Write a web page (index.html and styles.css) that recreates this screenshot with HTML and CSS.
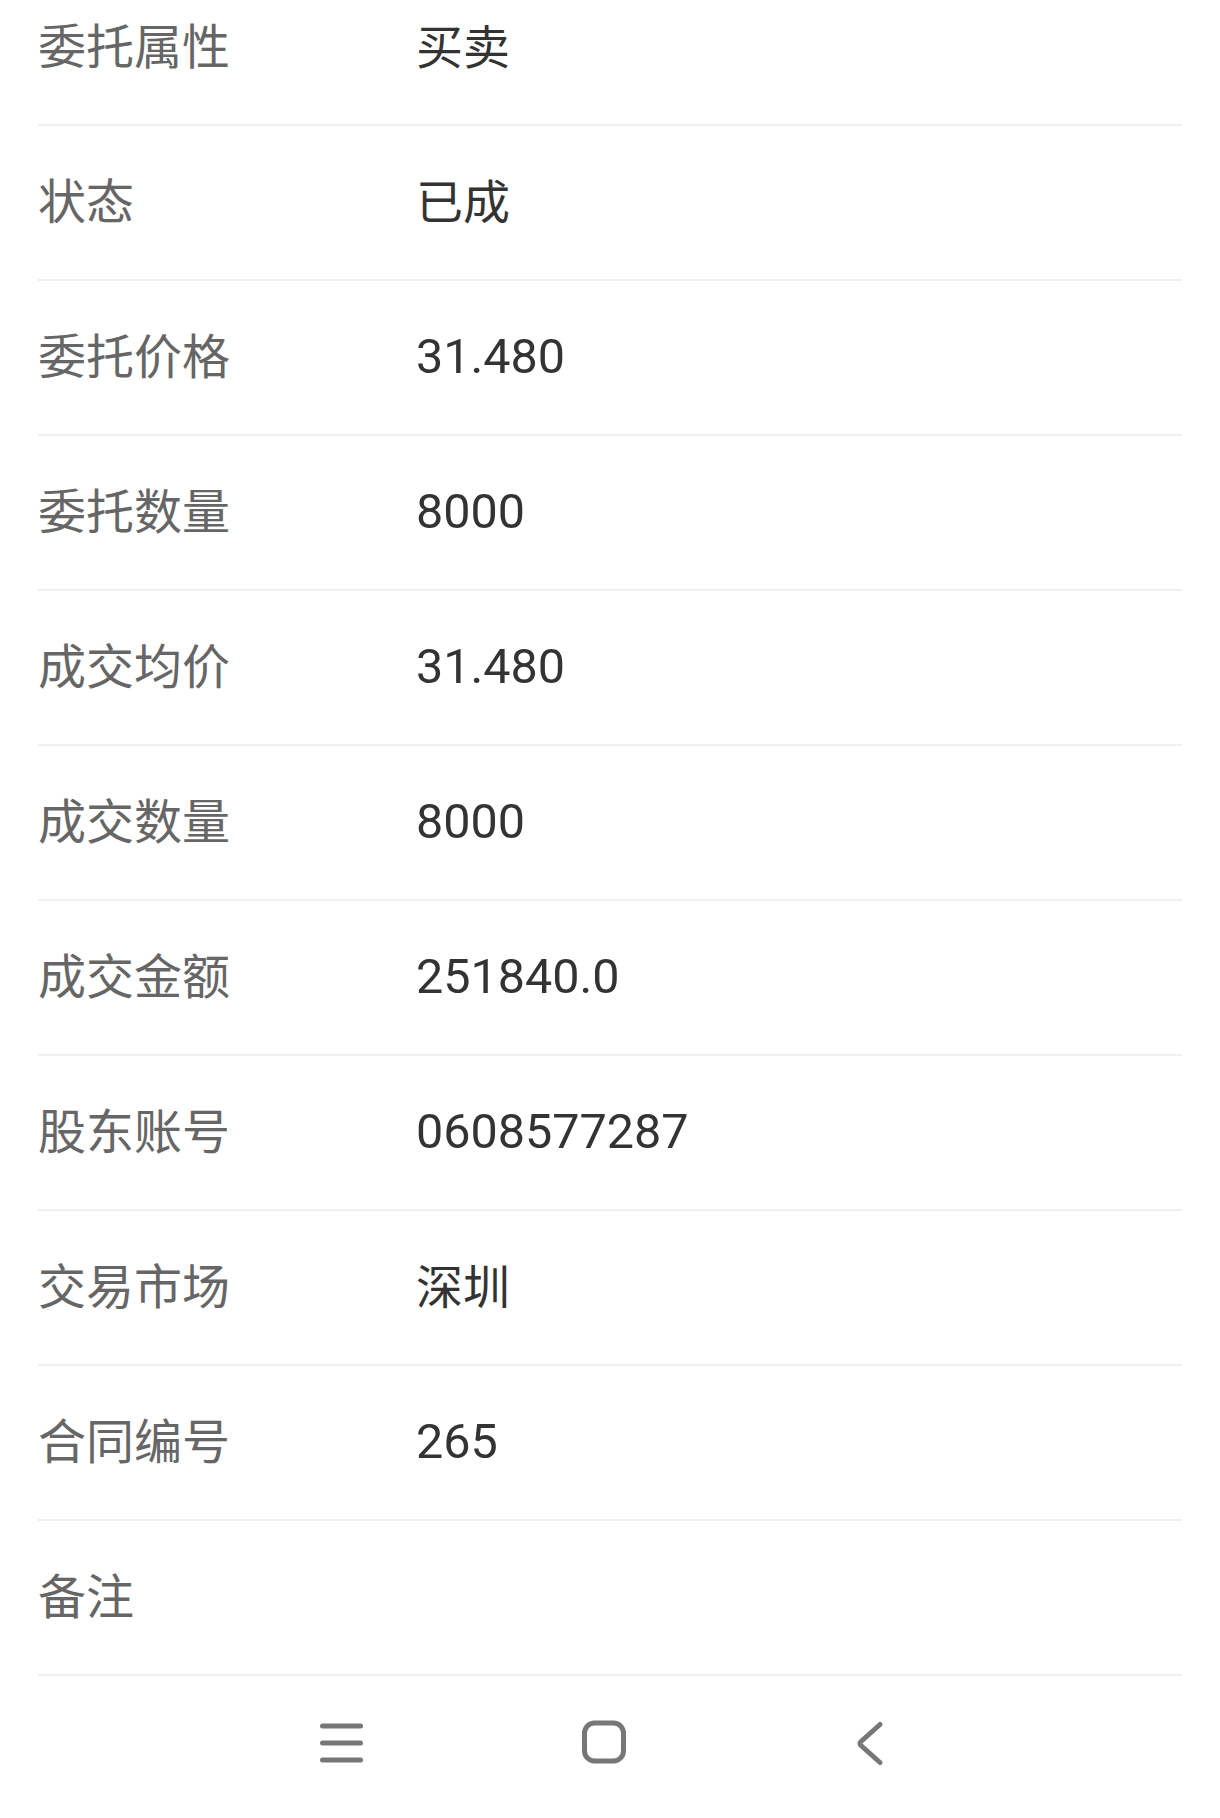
FILE: index.html
```html
<!DOCTYPE html>
<html lang="zh">
<head>
<meta charset="utf-8">
<link rel="stylesheet" href="styles.css">
</head>
<body>
<div class="screen">
  <div class="list">
    <div class="row"><span class="label">委托属性</span><span class="value cjk">买卖</span></div>
    <div class="row"><span class="label">状态</span><span class="value cjk">已成</span></div>
    <div class="row"><span class="label">委托价格</span><span class="value">31.480</span></div>
    <div class="row"><span class="label">委托数量</span><span class="value">8000</span></div>
    <div class="row"><span class="label">成交均价</span><span class="value">31.480</span></div>
    <div class="row"><span class="label">成交数量</span><span class="value">8000</span></div>
    <div class="row"><span class="label">成交金额</span><span class="value">251840.0</span></div>
    <div class="row"><span class="label">股东账号</span><span class="value">0608577287</span></div>
    <div class="row"><span class="label">交易市场</span><span class="value cjk">深圳</span></div>
    <div class="row"><span class="label">合同编号</span><span class="value">265</span></div>
    <div class="row"><span class="label">备注</span><span class="value"></span></div>
  </div>
  <div class="navbar">
    <svg class="nav-icon" width="60" height="60" viewBox="0 0 60 60">
      <g stroke="#777" stroke-width="5" stroke-linecap="round">
        <line x1="12.5" y1="13" x2="50.5" y2="13"/>
        <line x1="12.5" y1="30" x2="50.5" y2="30"/>
        <line x1="12.5" y1="47" x2="50.5" y2="47"/>
      </g>
    </svg>
    <svg class="nav-icon" width="60" height="60" viewBox="0 0 60 60">
      <rect x="10.5" y="10" width="39" height="38" rx="10" fill="none" stroke="#777" stroke-width="5"/>
    </svg>
    <svg class="nav-icon" width="60" height="60" viewBox="0 0 60 60">
      <path d="M42 11.5 L23 28.5 Q21 30.5 23 32.5 L42 49.5" fill="none" stroke="#777" stroke-width="5" stroke-linecap="round" stroke-linejoin="round"/>
    </svg>
  </div>
</div>
</body>
</html>
```

FILE: styles.css
```css
html, body {
  margin: 0;
  padding: 0;
  background: #ffffff;
}

.screen {
  width: 1220px;
  height: 1818px;
  overflow: hidden;
  display: flex;
  flex-direction: column;
  background: #ffffff;
}

.list {
  margin: -29px 38px 0 38px;
  display: flex;
  flex-direction: column;
}

.row {
  height: 153px;
  border-bottom: 2px solid #efefef;
  display: flex;
  align-items: center;
}

.label {
  width: 378px;
  flex: none;
  font-family: "Noto Sans CJK SC", "Noto Sans", sans-serif;
  font-size: 48px;
  color: #666666;
  line-height: 1;
  padding-bottom: 9px;
}

.value {
  font-family: Roboto, "Noto Sans CJK SC", sans-serif;
  font-size: 48.5px;
  color: #333333;
  line-height: 1;
}

.value.cjk {
  font-family: "Noto Sans CJK SC", sans-serif;
  font-size: 47px;
  padding-bottom: 9px;
}

.navbar {
  flex: 1;
  display: flex;
  align-items: flex-start;
  justify-content: center;
  gap: 204px;
  padding-top: 37px;
  padding-right: 12px;
}

.nav-icon {
  display: block;
  flex: none;
}
```
